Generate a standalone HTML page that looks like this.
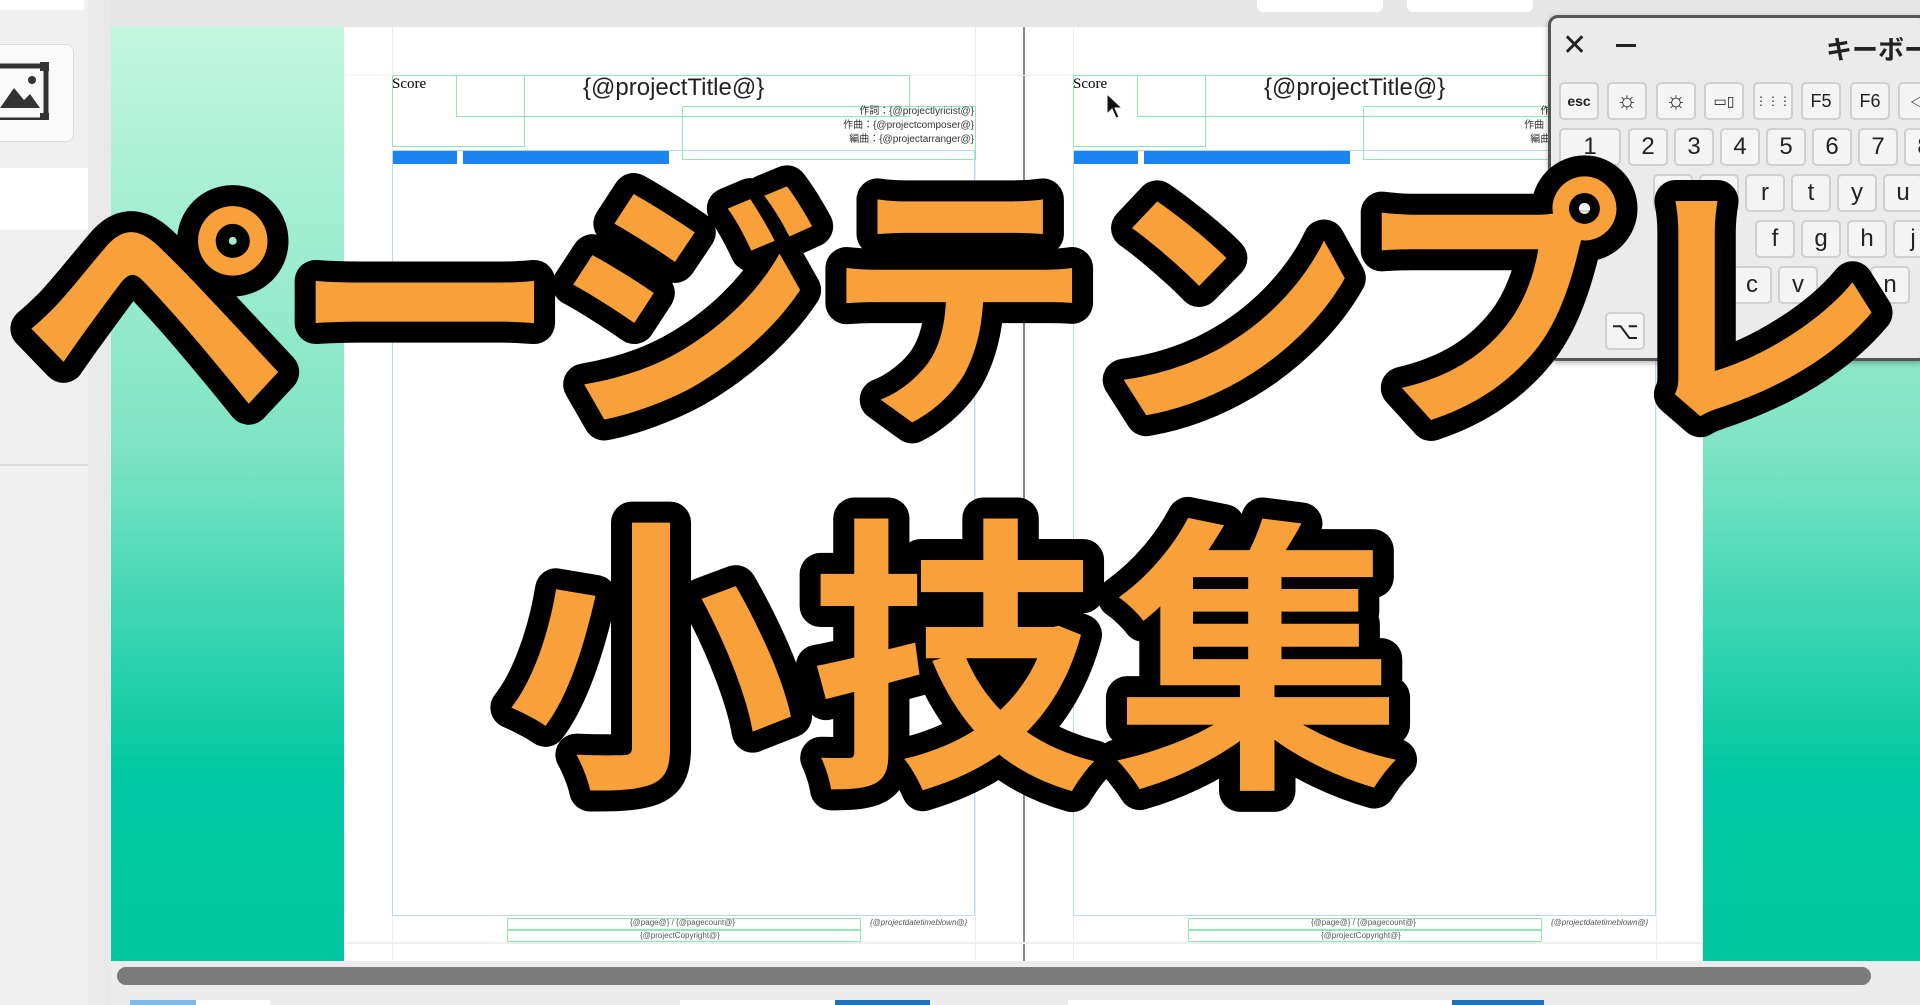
<!DOCTYPE html>
<html><head><meta charset="utf-8"><style>
*{margin:0;padding:0;box-sizing:border-box}
body{width:1920px;height:1005px;overflow:hidden;position:relative;background:#e6e6e6;font-family:"Liberation Sans","Noto Sans CJK JP",sans-serif}
.a{position:absolute}
.key{position:absolute;background:#f4f4f4;border:2px solid #cfcfcf;border-radius:5px;font-size:24px;color:#222;display:flex;align-items:center;justify-content:center}
.gl{position:absolute;border:1px solid #8fe8b0}
.tiny{font-size:10px;color:#333;text-align:right;line-height:14px}
</style></head><body>
<div class="a" style="left:0;top:0;width:88px;height:1005px;background:#f0f0f0"></div>
<div class="a" style="left:0;top:0;width:84px;height:10px;background:#fff"></div>
<div class="a" style="left:0;top:44px;width:74px;height:98px;background:#fafafa;border:1px solid #ddd;border-left:none;border-radius:0 8px 8px 0"></div>
<svg class="a" style="left:0;top:60px" width="54" height="60"><rect x="-4" y="6" width="50" height="54" fill="none" stroke="#333" stroke-width="5"/><rect x="40" y="2" width="9" height="9" fill="#333"/><rect x="40" y="53" width="9" height="9" fill="#333"/><path d="M0 48 L14 28 L24 40 L30 34 L40 48Z" fill="#333"/><circle cx="32" cy="20" r="4" fill="#333"/></svg>
<div class="a" style="left:0;top:168px;width:88px;height:62px;background:#fff"></div>
<div class="a" style="left:0;top:464px;width:88px;height:2px;background:#ddd"></div>
<div class="a" style="left:88px;top:0;width:23px;height:1005px;background:#e9e9e9"></div>
<div class="a" style="left:111px;top:0;width:1809px;height:27px;background:#e6e6e6"></div>
<div class="a" style="left:1257px;top:0;width:126px;height:12px;background:#fff;border-radius:0 0 6px 6px"></div>
<div class="a" style="left:1407px;top:0;width:126px;height:12px;background:#fff;border-radius:0 0 6px 6px"></div>
<div class="a" style="left:111px;top:27px;width:233px;height:934px;background:linear-gradient(#c2f6df,#7fe4c4 45%,#00c8a2 80%,#00c7a0)"></div>
<div class="a" style="left:1703px;top:27px;width:217px;height:934px;background:linear-gradient(#c2f6df,#7fe4c4 45%,#00c8a2 80%,#00c7a0)"></div>
<div class="a" style="left:344px;top:27px;width:1359px;height:934px;background:#fff"></div>
<div class="a" style="left:1023px;top:27px;width:2px;height:934px;background:#888"></div>
<div class="a" style="left:392px;top:27px;width:1px;height:934px;background:#eee"></div>
<div class="a" style="left:975px;top:27px;width:1px;height:934px;background:#eee"></div>
<div class="a" style="left:1073px;top:27px;width:1px;height:934px;background:#eee"></div>
<div class="a" style="left:1656px;top:27px;width:1px;height:934px;background:#eee"></div>
<div class="a" style="left:344px;top:75px;width:1359px;height:1px;background:#eee"></div>
<div class="a" style="left:344px;top:942px;width:1359px;height:2px;background:#eee"></div>
<div class="a" style="left:392px;top:76px;font-family:'Liberation Serif',serif;font-size:15px">Score</div>
<div class="gl" style="left:392px;top:75px;width:133px;height:72px"></div>
<div class="gl" style="left:456px;top:75px;width:454px;height:42px"></div>
<div class="a" style="left:583px;top:74px;font-size:24px;color:#222">{@projectTitle@}</div>
<div class="gl" style="left:682px;top:106px;width:294px;height:54px"></div>
<div class="a tiny" style="left:682px;top:105px;width:292px">作詞：{@projectlyricist@}<br>作曲：{@projectcomposer@}<br>編曲：{@projectarranger@}</div>
<div class="a" style="left:392px;top:150px;width:65px;height:14px;background:#1a84f0"></div>
<div class="a" style="left:463px;top:150px;width:206px;height:14px;background:#1a84f0"></div>
<div class="a" style="left:392px;top:150px;width:583px;height:766px;border:1px solid #b9d8f3"></div>
<div class="gl" style="left:507px;top:918px;width:354px;height:12px"></div>
<div class="gl" style="left:507px;top:930px;width:354px;height:12px"></div>
<div class="a" style="left:630px;top:918px;font-size:8px;color:#555">{@page@} / {@pagecount@}</div>
<div class="a" style="left:640px;top:931px;font-size:8px;color:#555">{@projectCopyright@}</div>
<div class="a" style="left:870px;top:918px;font-size:8px;color:#555;font-style:italic">{@projectdatetimeblown@}</div>
<div class="a" style="left:1073px;top:76px;font-family:'Liberation Serif',serif;font-size:15px">Score</div>
<div class="gl" style="left:1073px;top:75px;width:133px;height:72px"></div>
<div class="gl" style="left:1137px;top:75px;width:454px;height:42px"></div>
<div class="a" style="left:1264px;top:74px;font-size:24px;color:#222">{@projectTitle@}</div>
<div class="gl" style="left:1363px;top:106px;width:294px;height:54px"></div>
<div class="a tiny" style="left:1363px;top:105px;width:292px">作詞：{@projectlyricist@}<br>作曲：{@projectcomposer@}<br>編曲：{@projectarranger@}</div>
<div class="a" style="left:1073px;top:150px;width:65px;height:14px;background:#1a84f0"></div>
<div class="a" style="left:1144px;top:150px;width:206px;height:14px;background:#1a84f0"></div>
<div class="a" style="left:1073px;top:150px;width:583px;height:766px;border:1px solid #b9d8f3"></div>
<div class="gl" style="left:1188px;top:918px;width:354px;height:12px"></div>
<div class="gl" style="left:1188px;top:930px;width:354px;height:12px"></div>
<div class="a" style="left:1311px;top:918px;font-size:8px;color:#555">{@page@} / {@pagecount@}</div>
<div class="a" style="left:1321px;top:931px;font-size:8px;color:#555">{@projectCopyright@}</div>
<div class="a" style="left:1551px;top:918px;font-size:8px;color:#555;font-style:italic">{@projectdatetimeblown@}</div>
<svg class="a" style="left:1105px;top:92px" width="20" height="30"><path d="M2 2 L2 22 L7 17 L11 26 L14 25 L10 16 L17 16Z" fill="#111" stroke="#fff" stroke-width="1"/></svg>
<div class="a" style="left:111px;top:961px;width:1809px;height:44px;background:#ececec"></div>
<div class="a" style="left:117px;top:967px;width:1754px;height:18px;background:#7b7b7b;border-radius:9px"></div>
<div class="a" style="left:130px;top:1000px;width:140px;height:5px;background:#fff"></div>
<div class="a" style="left:130px;top:1000px;width:66px;height:5px;background:#7fbbe8"></div>
<div class="a" style="left:680px;top:1000px;width:250px;height:5px;background:#fff"></div>
<div class="a" style="left:835px;top:1000px;width:95px;height:5px;background:#1c6fb8"></div>
<div class="a" style="left:1068px;top:1000px;width:476px;height:5px;background:#fff"></div>
<div class="a" style="left:1452px;top:1000px;width:92px;height:5px;background:#1c6fb8"></div>
<div class="a" style="left:1548px;top:15px;width:380px;height:346px;background:#ebebeb;border:3px solid #555;border-radius:10px;box-shadow:0 2px 6px rgba(0,0,0,.3)"></div>
<div class="a" style="left:1562px;top:28px;font-size:30px;color:#222">✕</div>
<div class="a" style="left:1616px;top:44px;width:20px;height:3px;background:#222"></div>
<div class="a" style="left:1826px;top:30px;font-size:26px;font-weight:bold;color:#222;white-space:nowrap">キーボード</div>
<div class="key" style="left:1559px;top:82px;width:40px;height:38px;font-size:14px;font-weight:bold">esc</div>
<div class="key" style="left:1607px;top:82px;width:40px;height:38px">☼</div>
<div class="key" style="left:1656px;top:82px;width:40px;height:38px">☼</div>
<div class="key" style="left:1704px;top:82px;width:40px;height:38px;font-size:14px">▭▯</div>
<div class="key" style="left:1753px;top:82px;width:40px;height:38px;font-size:12px">⋮⋮⋮</div>
<div class="key" style="left:1801px;top:82px;width:40px;height:38px;font-size:18px">F5</div>
<div class="key" style="left:1850px;top:82px;width:40px;height:38px;font-size:18px">F6</div>
<div class="key" style="left:1898px;top:82px;width:40px;height:38px;font-size:16px">◁</div>
<div class="key" style="left:1559px;top:128px;width:62px;height:38px">1</div>
<div class="key" style="left:1628px;top:128px;width:40px;height:38px">2</div>
<div class="key" style="left:1674px;top:128px;width:40px;height:38px">3</div>
<div class="key" style="left:1720px;top:128px;width:40px;height:38px">4</div>
<div class="key" style="left:1766px;top:128px;width:40px;height:38px">5</div>
<div class="key" style="left:1812px;top:128px;width:40px;height:38px">6</div>
<div class="key" style="left:1858px;top:128px;width:40px;height:38px">7</div>
<div class="key" style="left:1904px;top:128px;width:40px;height:38px">8</div>
<div class="key" style="left:1560px;top:174px;width:48px;height:38px"></div>
<div class="key" style="left:1653px;top:174px;width:40px;height:38px"></div>
<div class="key" style="left:1699px;top:174px;width:40px;height:38px"></div>
<div class="key" style="left:1745px;top:174px;width:40px;height:38px">r</div>
<div class="key" style="left:1791px;top:174px;width:40px;height:38px">t</div>
<div class="key" style="left:1837px;top:174px;width:40px;height:38px">y</div>
<div class="key" style="left:1883px;top:174px;width:40px;height:38px">u</div>
<div class="key" style="left:1755px;top:220px;width:40px;height:38px">f</div>
<div class="key" style="left:1801px;top:220px;width:40px;height:38px">g</div>
<div class="key" style="left:1847px;top:220px;width:40px;height:38px">h</div>
<div class="key" style="left:1893px;top:220px;width:40px;height:38px">j</div>
<div class="key" style="left:1732px;top:266px;width:40px;height:38px">c</div>
<div class="key" style="left:1778px;top:266px;width:40px;height:38px">v</div>
<div class="key" style="left:1870px;top:266px;width:40px;height:38px">n</div>
<div class="key" style="left:1605px;top:312px;width:40px;height:38px">⌥</div>
<svg class="a" style="left:0;top:0" width="1920" height="1005">
<g font-family="Noto Sans CJK JP, sans-serif" font-weight="700" fill="#f8a03a" stroke="#000" stroke-width="42" stroke-linejoin="round" paint-order="stroke fill">
<text x="22" y="405" font-size="268" letter-spacing="1">ページテンプレ</text>
<text x="505" y="765" font-size="290" letter-spacing="14">小技集</text>
</g>
</svg>
</body></html>
